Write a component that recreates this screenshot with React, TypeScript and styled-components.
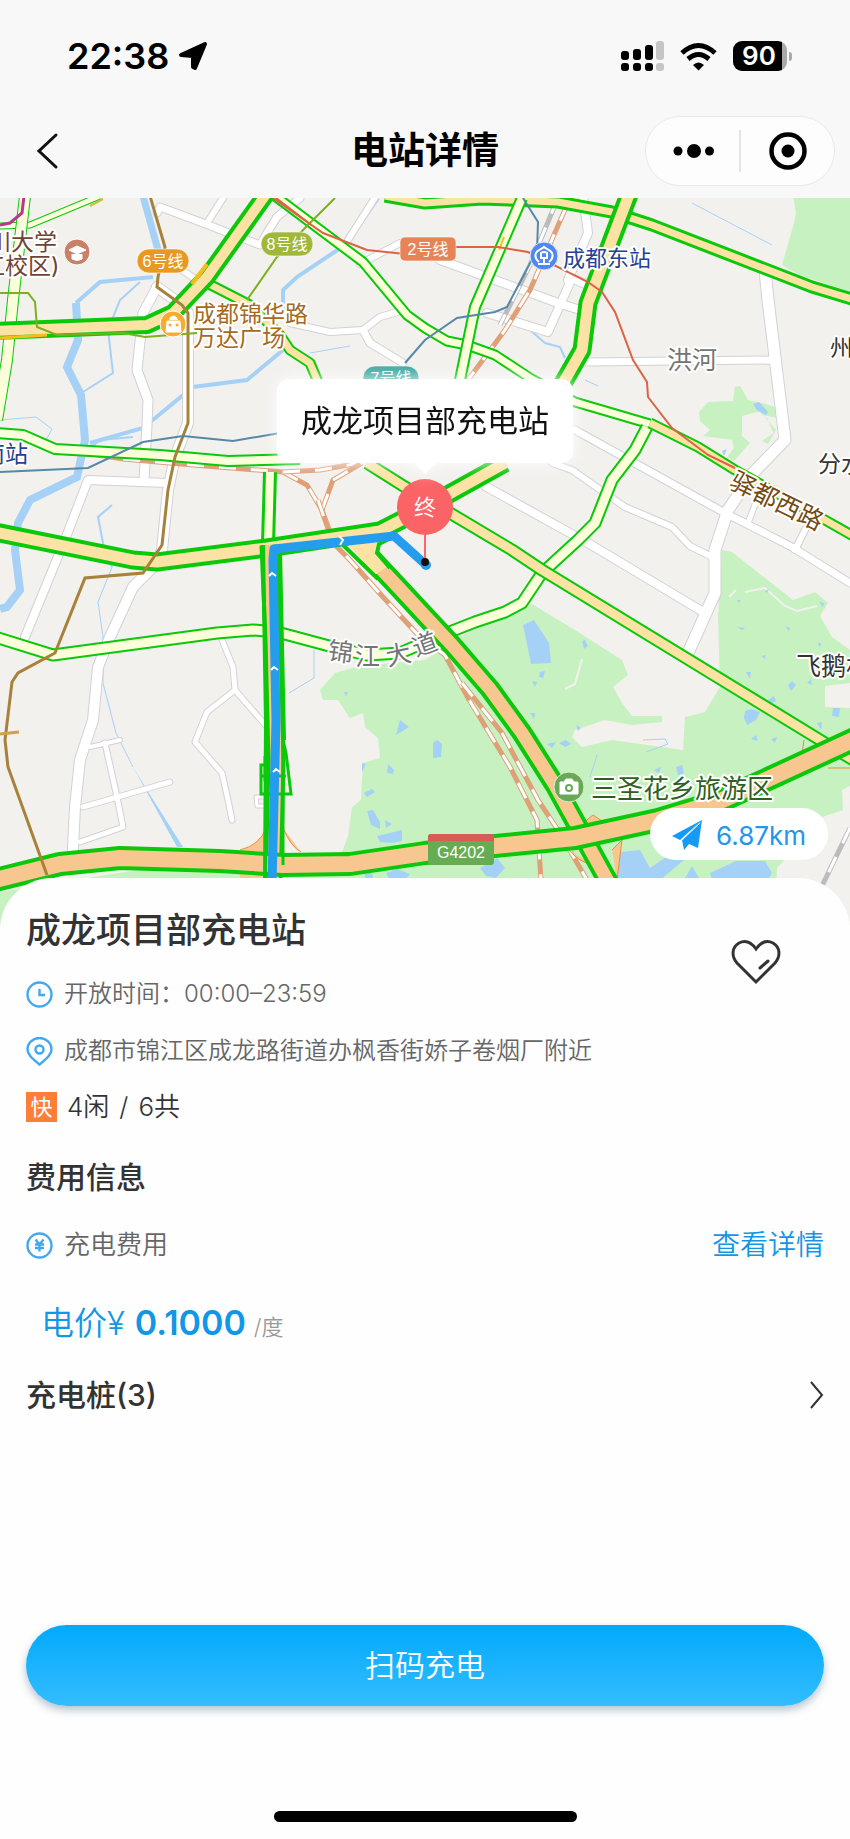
import React from "react";
import styled, { createGlobalStyle } from "styled-components";

const blue = "#1296e6";
const sans = `Inter, "Noto Sans CJK SC", sans-serif`;

const GlobalStyle = createGlobalStyle`
  * { box-sizing: border-box; }
  body { margin: 0; background: #fefefe; color: #333; font-family: ${sans}; }
  button { border: 0; padding: 0; background: none; color: inherit; font: inherit; cursor: pointer; }
  h1, h2, p { margin: 0; }
  svg { display: block; }
`;

const Screen = styled.div`
  display: flex;
  flex-direction: column;
  min-height: 100vh;
`;

const TopArea = styled.header`
  height: 198px;
  background: #f8f8f8;
`;

const StatusBar = styled.div`
  display: flex;
  align-items: center;
  height: 112px;
  padding: 0 58px 0 67px;
  color: #000;
`;

const Clock = styled.time`
  font-size: 36px;
  font-weight: 600;
  line-height: 44px;
`;

const StatusIcons = styled.div`
  display: flex;
  align-items: center;
  gap: 16px;
  margin-left: auto;
`;

const Battery = styled.div`
  display: flex;
  align-items: center;
  gap: 2px;
`;

const BatteryLevel = styled.span`
  width: 54px;
  height: 30px;
  padding-right: 2px;
  border-radius: 9px;
  background: linear-gradient(90deg, #000 49px, #a9a9a9 49px);
  color: #fff;
  font-size: 26px;
  font-weight: 600;
  line-height: 30px;
  text-align: center;
`;

const BatteryCap = styled.span`
  width: 3px;
  height: 9px;
  border-radius: 0 3px 3px 0;
  background: #a9a9a9;
`;

const NavBar = styled.nav`
  display: grid;
  grid-template-columns: 1fr auto 1fr;
  align-items: center;
  height: 77px;
  padding: 0 15px;
  color: #000;
`;

const BackButton = styled.button`
  width: 36px;
  height: 48px;
  margin-left: 15px;
`;

const NavTitle = styled.h1`
  font-size: 37px;
  font-weight: 700;
  line-height: 48px;
`;

const Capsule = styled.div`
  display: flex;
  align-items: center;
  justify-self: end;
  width: 190px;
  height: 70px;
  border: 1px solid #e9e9e9;
  border-radius: 35px;
  background: #fdfdfd;
`;

const CapsuleButton = styled.button`
  display: grid;
  place-items: center;
  flex: 1;
  height: 42px;

  & + & { border-left: 2px solid #e4e4e4; }
`;

const MapArea = styled.section`
  position: relative;
  overflow: hidden;
  aspect-ratio: 850 / 740;
  background: #f2f1ee;
`;

const MapCanvas = styled.svg`
  width: 100%;
  height: 100%;
`;

const Callout = styled.div`
  position: absolute;
  top: 24.4%;
  left: 50%;
  display: flex;
  flex-direction: column;
  align-items: center;
  transform: translateX(-50%);
  filter: drop-shadow(0 0 8px rgba(255, 255, 255, 0.9));
`;

const CalloutText = styled.p`
  padding: 18px 24px;
  border-radius: 12px;
  background: #fff;
  color: #111;
  font-size: 31px;
  line-height: 48px;
  white-space: nowrap;
`;

const CalloutTail = styled.span`
  border: 11px solid transparent;
  border-bottom: 0;
  border-top-color: #fff;
`;

const Distance = styled.button`
  position: absolute;
  top: 82.4%;
  right: 22px;
  display: flex;
  align-items: center;
  gap: 14px;
  height: 52px;
  padding: 3px 22px 0;
  border-radius: 26px;
  background: #fff;
  color: #2196ea;
  font-size: 26px;
`;

const Sheet = styled.main`
  position: relative;
  display: flex;
  flex: 1;
  flex-direction: column;
  margin-top: -60px;
  padding: 27px 26px 17px;
  border-radius: 52px 52px 0 0;
  background: #fefefe;
`;

const SheetHeader = styled.div`
  display: flex;
  align-items: flex-end;
  justify-content: space-between;
  padding-right: 43px;
`;

const StationName = styled.h2`
  font-size: 35px;
  font-weight: 500;
  line-height: 50px;
`;

const Favorite = styled.button`
  padding-bottom: 27px;
`;

const InfoRow = styled.p`
  display: flex;
  align-items: center;
  gap: 11px;
  margin-top: 21px;
  color: #666;
  font-size: 24px;
  font-weight: 350;
  line-height: 36px;
`;

const Availability = styled(InfoRow)`
  gap: 10px;
  margin-top: 20px;
  color: #333;
  font-size: 26px;
`;

const FastTag = styled.span`
  width: 31px;
  height: 30px;
  background: #fb7e39;
  color: #fff;
  font-size: 22px;
  font-weight: 400;
  line-height: 30px;
  text-align: center;
`;

const SectionTitle = styled.h2`
  margin-top: 30px;
  font-size: 30px;
  font-weight: 500;
  line-height: 44px;
`;

const FeeRow = styled.div`
  display: flex;
  align-items: center;
  gap: 11px;
  margin-top: 26px;
  color: #666;
  font-size: 26px;
  font-weight: 350;
  line-height: 40px;
`;

const DetailLink = styled.a`
  margin-left: auto;
  color: ${blue};
  font-size: 28px;
  text-decoration: none;
`;

const Price = styled.p`
  display: flex;
  align-items: baseline;
  margin-top: 34px;
  padding-left: 15px;
  color: ${blue};
  font-size: 33px;
  font-weight: 350;
  line-height: 48px;
`;

const Amount = styled.strong`
  margin-left: 10px;
  font-size: 34px;
  font-weight: 600;
`;

const Unit = styled.span`
  margin-left: 8px;
  color: #999;
  font-size: 22px;
`;

const PilesButton = styled.button`
  display: flex;
  align-items: center;
  justify-content: space-between;
  margin-top: 22px;
  font-size: 30px;
  font-weight: 500;
  line-height: 44px;
`;

const ScanButton = styled.button`
  height: 81px;
  margin-top: auto;
  padding-bottom: 5px;
  border-radius: 41px;
  background: linear-gradient(#02a9fb, #34bdff);
  box-shadow: 0 4px 9px rgba(40, 80, 120, 0.35);
  color: #fff;
  font-size: 30px;
  font-weight: 350;
`;

const HomeIndicator = styled.div`
  align-self: center;
  width: 303px;
  height: 11px;
  margin-top: 105px;
  border-radius: 6px;
  background: #000;
`;

/* ---- Map data ---- */

type Line = [points: string, width: number];

const rivers: Line[] = [
  ["143,196 158,250", 7],
  ["153,277 100,282 76,303", 4],
  ["76,303 78,340 67,367 81,395 85,440 77,477 30,500 18,523 15,550 20,590 7,607 0,609", 8],
  ["83,392 113,373 108,330 120,300 140,282", 2],
  ["90,443 143,428 193,387 247,380 283,350", 4],
  ["88,450 100,440 133,437", 2],
  ["378,198 345,245 297,277 283,290 283,310", 4],
  ["112,567 98,602 103,637 103,683 116,733 133,767", 1],
  ["112,505 98,517 103,543 112,567", 2],
  ["314,650 314,678 289,693", 1],
  ["692,203 772,245", 1],
  ["530,330 545,343 560,347 565,358", 2],
  ["0,420 36,417 52,429 46,440", 1],
  ["310,353 350,346", 1],
  ["585,380 598,386", 1],
];

const whiteRoads: Line[] = [
  ["157,213 160,207 203,223 260,245 267,233 277,217 300,198", 7],
  ["223,198 207,223", 6],
  ["376,196 348,240", 6],
  ["360,264 400,243", 6],
  ["170,262 207,287", 6],
  ["157,287 143,313 137,370 148,400 147,425 144,480", 9],
  ["157,287 182,305 188,313 188,423 175,457 168,490 162,550 157,563 133,587 110,637 98,667 93,720 80,760 75,807 72,866", 10],
  ["25,637 66,537 88,480 167,483", 8],
  ["90,747 120,740", 4],
  ["105,743 117,797 123,827 80,842", 5],
  ["83,807 170,782", 5],
  ["222,640 233,667 235,690 207,712 195,742 222,773 228,800 232,820", 5],
  ["235,690 267,727", 5],
  ["268,797 256,797 257,806 268,806", 3],
  ["290,323 330,332 363,330 380,317 397,312", 6],
  ["363,330 370,343 403,363", 7],
  ["440,260 558,303 577,309", 8],
  ["487,313 548,332 572,278 592,287", 8],
  ["568,280 588,233 583,196", 8],
  ["765,270 768,300 775,357 785,440 753,473 728,510 715,550 715,593 688,653", 11],
  ["588,362 775,360", 7],
  ["575,430 725,513 792,547 850,583", 7],
  ["485,486 588,543 705,613", 8],
  ["552,463 572,470 625,507 672,527 690,546 712,557", 6],
  ["758,497 748,523", 5],
  ["805,530 795,550", 6],
];

const parks = [
  "793,196 796,213 794,223 782,265 800,275 850,292 850,196",
  "740,386 735,387 733,401 708,402 699,412 700,421 710,430 703,436 732,440 734,448 727,457 734,461 750,443 742,436 742,416 757,412 767,418 773,433 762,441 768,444 776,430 763,415 777,418 777,408 766,404 748,400",
  "425,660 360,666 335,673 320,690 323,700 338,700 350,718 363,713 365,727 378,738 380,758 363,763 361,800 352,807 348,836 339,860 420,890 776,890 777,868 822,817 843,810 842,790 850,786 850,708 825,707 825,686 850,683 850,650 832,637 820,616 828,603 815,592 793,600 732,552 722,550 718,617 720,687 705,712 685,717 683,750 612,740 582,747 572,737 575,730 605,720 632,725 662,722 662,716 632,716 622,703 613,687 628,675 622,660 575,630 532,604 475,628",
  "0,892 150,868 425,868 425,940 0,940",
];

const lakes = [
  "523,625 534,620 549,643 551,663 531,664",
  "400,720 396,735 409,727", "344,692 348,692 346,697",
  "362,763 366,764 362,772", "388,764 394,770 393,774 387,773",
  "364,793 372,789 375,792 367,797", "367,811 373,810 380,822 380,829 371,825",
  "385,820 392,824 386,828", "377,836 402,830 402,841 392,843 380,842",
  "433,743 437,740 442,744 441,757 433,758",
  "582,641 585,640 588,646 584,649", "540,672 545,671 543,678 539,677",
  "532,681 537,682 535,687", "530,713 535,713 534,719", "547,744 556,742 552,748",
  "559,743 566,740 571,744 565,747", "576,725 581,728 578,731",
  "654,770 661,767 659,773", "676,767 682,765 684,774 678,775",
  "745,711 752,709 760,712 756,720 747,725 744,718", "768,700 774,696 776,701 770,704",
  "788,685 792,681 796,685 791,691", "807,683 811,679 812,685", "833,708 840,708 839,717 832,716",
  "818,642 822,644 819,647", "746,672 751,672 750,679", "761,656 766,655 765,659",
  "765,591 769,589 767,593", "737,600 741,600 739,603", "737,627 745,628 742,630",
  "785,626 790,628 789,631", "819,602 824,603 823,607", "771,739 777,737 775,743",
  "751,739 756,735 758,741", "817,723 822,722 821,730",
  "480,868 497,858 505,868 496,878 486,876", "614,878 620,852 640,850 650,868 672,853 700,851 684,860 660,880",
  "710,873 736,861 765,861 772,873 768,880 712,880", "685,878 692,866 700,880",
  "364,872 371,872 374,880 366,880", "386,873 397,869 410,874 405,880 390,880",
  "753,404 759,402 768,412 766,415 757,410", "722,451 727,449 724,456",
];

type Highway = { points: string; width: number; edge: number; fill: string };

const cream = "#fafed9";
const yellow = "#fce3a5";
const orange = "#f8c78f";

const highways: Highway[] = [
  { points: "0,226 30,225 100,196", width: 7, edge: 1, fill: cream },
  { points: "25,196 13,300 7,360 -3,420", width: 12, edge: 1, fill: cream },
  { points: "-5,433 23,435 55,449 160,455 228,461 300,459", width: 12, edge: 2, fill: cream },
  { points: "275,196 363,262 407,315 425,328 447,341 467,345 495,355 530,378 575,402 650,424", width: 11, edge: 2, fill: cream },
  { points: "-5,637 53,655 217,633 253,630 277,632 333,647 367,655 400,653 442,635 475,622 505,612 522,603 542,573 578,540 595,523 612,480 635,450 647,427", width: 13, edge: 2, fill: cream },
  { points: "207,283 250,305 280,335 290,350 310,363 318,382", width: 11, edge: 2, fill: yellow },
  { points: "650,423 698,447 735,470 825,520 855,537", width: 11, edge: 2, fill: yellow },
  { points: "270,472 268,545", width: 14, edge: 3, fill: cream },
  { points: "367,463 405,487 445,510 512,550 542,570 825,743 855,761", width: 13, edge: 2, fill: yellow },
  { points: "385,196 425,203 482,199 558,202 612,212 652,225 812,287 855,300", width: 13, edge: 3, fill: yellow },
  { points: "-5,331 147,325 173,313 207,277 267,193", width: 18, edge: 4, fill: yellow },
  { points: "522,198 475,307 460,380", width: 12, edge: 2, fill: cream },
  { points: "630,192 588,303 582,350 562,385", width: 19, edge: 4, fill: yellow },
  { points: "-5,532 133,560 157,562 267,548 380,531 415,513 505,463", width: 19, edge: 4, fill: yellow },
  { points: "269,545 273,640 276,760 273,890", width: 19, edge: 4, fill: orange },
  { points: "370,557 400,589 425,616 452,645 490,689 522,733 555,785 610,885", width: 21, edge: 4, fill: orange },
  { points: "-5,880 60,864 120,858 220,861 283,865 350,864 425,853 575,838 658,820 718,802 855,739", width: 24, edge: 4, fill: orange },
];

type Rail = { points: string; gray?: boolean };

const rails: Rail[] = [
  { points: "558,198 530,265 500,325", gray: true },
  { points: "567,205 530,290 505,330 468,380" },
  { points: "60,449 123,459 193,465 283,472 307,485 322,510 333,540" },
  { points: "283,472 320,470 360,463" },
  { points: "322,510 333,480 362,463" },
  { points: "318,500 333,543 350,560 383,597 420,637 445,655 468,698 510,767 537,820 541,880" },
  { points: "462,683 502,733 538,800 558,830 587,880" },
  { points: "850,828 820,890", gray: true },
];

type Transit = { points: string; color: string; width: number };

const transit: Transit[] = [
  { points: "24,196 22,213 10,223 0,225", color: "#b8388f", width: 3 },
  { points: "150,196 165,247 158,277 157,287 182,305 188,313 188,423 175,457 168,490 162,545 143,573 85,578 55,653 18,673 12,682 5,740 8,767 47,875", color: "#a8813a", width: 3 },
  { points: "0,734 19,732", color: "#d0a14a", width: 3 },
  { points: "335,198 305,228 277,257 247,300", color: "#7fae20", width: 2 },
  { points: "0,293 28,293 35,302 37,327 57,335 123,333 145,337 197,333", color: "#7fae20", width: 2 },
  { points: "273,198 323,233 367,250 405,254 455,247 498,247 528,252 588,282 602,292 615,312 633,360 647,382 648,397 672,428 708,455 735,468", color: "#dc6246", width: 2 },
  { points: "523,198 538,222 537,250 507,307 495,312 457,318 425,340 405,363", color: "#5688a8", width: 2 },
  { points: "0,472 88,468 143,442 183,436 233,441 280,433", color: "#5688a8", width: 2 },
];

const MapLabel = styled.text<{ $size: number; $color: string }>`
  font-size: ${(p) => p.$size}px;
  fill: ${(p) => p.$color};
  stroke: #fffffb;
  stroke-width: 4px;
  stroke-linejoin: round;
  paint-order: stroke;
`;

const BadgeText = styled.text`
  fill: #fff;
  font-family: "Liberation Sans", "Noto Sans CJK SC", sans-serif;
  font-size: 16px;
  text-anchor: middle;
`;

function LineBadge({ x, y, width, color, radius = 12, label }: { x: number; y: number; width: number; color: string; radius?: number; label: string }) {
  return (
    <g>
      <rect x={x - width / 2} y={y - 12} width={width} height={24} rx={radius} fill={color} stroke="#fff" strokeOpacity=".6" />
      <BadgeText x={x} y={y + 6} fontSize="15">{label}</BadgeText>
    </g>
  );
}

function CityMap() {
  return (
    <MapCanvas viewBox="0 198 850 740" preserveAspectRatio="xMidYMin slice" fill="none" role="img" aria-label="路线地图">
      {parks.map((p) => <polygon key={p} points={p} fill="#c8f1c2" />)}
      <polygon points="742,418 760,412 767,420 773,433 762,441 744,434" fill="#f2f1ee" />
      <path d="M729 597l7-7M745 592l20-4 20 18 12 5 20-5M565 689l10-5 7-25M772 785l20-6" stroke="#f2f1ee" strokeWidth="2" />
      {lakes.map((p) => <polygon key={p} points={p} fill="#a6d1f7" />)}
      <polygon points="133,767 147,790 183,847 177,847" fill="#a6d1f7" />
      <path d="M643 740l22-1 3 5-22 8M597 755l-7 22" stroke="#a6d1f7" />
      {rivers.map(([p, w]) => <polyline key={p} points={p} stroke="#a6d1f7" strokeWidth={w} />)}
      {whiteRoads.map(([p, w]) => <polyline key={p} points={p} stroke="#d2d2d6" strokeWidth={w + 2} strokeLinejoin="round" strokeLinecap="round" />)}
      {whiteRoads.map(([p, w]) => <polyline key={p} points={p} stroke="#fff" strokeWidth={w} strokeLinejoin="round" strokeLinecap="round" />)}
      {rails.map(({ points, gray }) => (
        <g key={points}>
          <polyline points={points} stroke={gray ? "#bcbcbc" : "#dfa078"} strokeWidth="5" />
          <polyline points={points} stroke="#fff" strokeWidth="3" strokeDasharray="17 15" />
        </g>
      ))}
      <path d="M240 850q20-5 26-22v60h-26M283 828q8 19 18 24M569 835l24-20 12 8M569 850q10 12 22 14M612 850l10-10-5 40M804 740q-2 13-2 18M812 740h40M828 768h24" fill={orange} stroke="#eb8d3b" />
      {highways.map(({ points, width, edge, fill }) => (
        <g key={points} strokeLinejoin="round">
          <polyline points={points} stroke="#0bc80b" strokeWidth={width} />
          <polyline points={points} stroke={fill} strokeWidth={width - edge * 2} />
        </g>
      ))}
      <polygon points="345,541 392,534 379,543 377,553 388,566 375,575" fill={yellow} />
      <path d="M343 545L378 579M391 538L379 544 377 553 390 568" stroke="#0bc80b" strokeWidth="4" />
      <path d="M207 264L192 284" stroke="#f6bd20" strokeWidth="4" />
      <path d="M0 338L47 335" stroke="#f6bd20" strokeWidth="3" />
      <path d="M90 206L103 199" stroke="#c9c23a" strokeWidth="2" />
      <path d="M504 237L499 250" stroke="#f6bd20" strokeWidth="2" />
      <path d="M276 198L310 224" stroke="#dc6246" strokeWidth="2" />
      <path d="M265 780v-15h-4v29h30l-5-41-3-13v125M265 756v25M261 776h25" stroke="#0bc80b" strokeWidth="3" />
      <path d="M263 545L266 722 265 884M280 550L284 740" stroke="#0bc80b" strokeWidth="4" />
      {transit.map(({ points, color, width }) => <polyline key={points} points={points} stroke={color} strokeWidth={width} />)}
      <path d="M425 564L394 536 274 549 273 560 276 720 272 884" stroke="#259ded" strokeWidth="9" strokeLinejoin="round" />
      <g stroke="#fff" strokeWidth="2">
        <path d="M339 536l4 4-3 5M269 576l3-3 4 3M271 670l3-3 4 3M273 772l3-3 4 3" />
      </g>

      <MapLabel x="-12" y="250" $size={23} $color="#6d4438">川大学</MapLabel>
      <MapLabel x="-18" y="274" $size={23} $color="#6d4438">江校区)</MapLabel>
      <circle cx="77" cy="252" r="13" fill="#c98069" stroke="#fff" />
      <path d="M69 250l8-4 9 4-9 4zM72 254v5q5 3 10 0v-5" fill="#fff" stroke="#fff" />
      <LineBadge x={163} y={261} width={52} color="#e69a23" label="6号线" />
      <LineBadge x={287} y={244} width={52} color="#9fb83a" label="8号线" />
      <LineBadge x={428} y={249} width={56} color="#e68357" radius={5} label="2号线" />
      <LineBadge x={391} y={378} width={56} color="#3faaa2" label="7号线" />
      <circle cx="173" cy="324" r="13" fill="#f8ab2e" stroke="#fff" />
      <path d="M167 321h13l1 11h-15zM170 320v-2q3-4 7 0v2" fill="#fff" stroke="#fff" />
      <path d="M170 325h.1M177 325h.1" stroke="#f8ab2e" strokeWidth="3" strokeLinecap="round" />
      <MapLabel x="193" y="322" $size={23} $color="#a5691f">成都锦华路</MapLabel>
      <MapLabel x="193" y="346" $size={23} $color="#a5691f">万达广场</MapLabel>
      <circle cx="544" cy="256" r="14" fill="#5188ef" stroke="#dceaff" />
      <path d="M539 262q-5-4-3-9c2-4 5-3 8-6 3 3 6 2 8 6q2 5-3 9M541 258v-5q3-2 6 0v5zM538 264h12M544 259v4" stroke="#fff" strokeWidth="2" />
      <MapLabel x="563" y="266" $size={22} $color="#254196">成都东站</MapLabel>
      <MapLabel x="-18" y="462" $size={23} $color="#254196">南站</MapLabel>
      <MapLabel x="667" y="369" $size={25} $color="#74757a">洪河</MapLabel>
      <MapLabel x="830" y="356" $size={23} $color="#333">州镇</MapLabel>
      <MapLabel x="818" y="472" $size={23} $color="#333">分水</MapLabel>
      <MapLabel x="728" y="487" $size={25} $color="#724a12" transform="rotate(26 728 487)">驿都西路</MapLabel>
      <MapLabel x="327" y="659" $size={25} $color="#74757a" transform="rotate(8 327 659)">锦</MapLabel>
      <MapLabel x="355" y="665" $size={25} $color="#74757a">江</MapLabel>
      <MapLabel x="388" y="666" $size={25} $color="#74757a" transform="rotate(-12 388 666)">大</MapLabel>
      <MapLabel x="416" y="657" $size={25} $color="#74757a" transform="rotate(-20 416 657)">道</MapLabel>
      <MapLabel x="796" y="675" $size={25} $color="#333">飞鹅村</MapLabel>
      <circle cx="569" cy="787" r="15" fill="#68a956" stroke="#d7efcf" />
      <path d="M560 782h4l2-3h6l2 3h4v12h-18z" fill="#fff" stroke="#fff" strokeLinejoin="round" />
      <circle cx="569" cy="788" r="3" stroke="#68a956" strokeWidth="2" />
      <MapLabel x="591" y="798" $size={26} $color="#2d5f27">三圣花乡旅游区</MapLabel>
      <rect x="428" y="834" width="66" height="31" rx="3" fill="#66ac52" />
      <path d="M431 834h60q3 0 3 3v4h-66v-4q0-3 3-3z" fill="#d95b55" />
      <BadgeText x="461" y="858">G4202</BadgeText>

      <circle cx="426" cy="565" r="5" fill="#259ded" />
      <path d="M425 530v32" stroke="#f86a6b" strokeWidth="2" />
      <circle cx="425" cy="562" r="4" fill="#111" />
      <circle cx="425" cy="507" r="28" fill="#fb6467" />
      <text x="425" y="515" fill="#fff" fontSize="22" fontWeight="350" textAnchor="middle">终</text>
    </MapCanvas>
  );
}

/* ---- Icons ---- */

const LocationArrow = styled.svg`
  margin-left: 9px;
`;

const LineIcon = styled.svg`
  flex: none;
  width: 27px;
  height: 29px;
  fill: none;
  stroke: #42a8ec;
  stroke-width: 2.4;
`;

export default function App() {
  return (
    <Screen>
      <GlobalStyle />
      <TopArea>
        <StatusBar>
          <Clock>22:38</Clock>
          <LocationArrow width="30" height="30" viewBox="0 0 30 30" aria-hidden="true">
            <path d="M3 14L27 3 17 27 15 26V15L3 14z" stroke="#000" strokeWidth="4" strokeLinejoin="round" />
          </LocationArrow>
          <StatusIcons>
            <svg width="43" height="31" viewBox="0 0 43 31" aria-label="信号">
              <rect x="0" y="10" width="8" height="9" rx="3" />
              <rect x="12" y="8" width="8" height="11" rx="3" />
              <rect x="24" y="4" width="8" height="15" rx="3" />
              <rect x="35" y="0" width="8" height="19" rx="3" fill="#c5c5c5" />
              <rect x="0" y="22" width="8" height="8" rx="3" />
              <rect x="12" y="22" width="8" height="8" rx="3" />
              <rect x="24" y="22" width="8" height="8" rx="3" />
              <rect x="35" y="22" width="8" height="8" rx="3" fill="#c5c5c5" />
            </svg>
            <svg width="37" height="29" viewBox="0 0 37 29" fill="none" stroke="#000" strokeWidth="5" aria-label="无线网络">
              <path d="M2 11Q18.500-4 35 11M8 17Q18.500 8 29 17" />
              <path d="M13 23Q18.500 18 24 23L18.500 28.500z" fill="#000" stroke="none" />
            </svg>
            <Battery>
              <BatteryLevel>90</BatteryLevel>
              <BatteryCap />
            </Battery>
          </StatusIcons>
        </StatusBar>
        <NavBar>
          <BackButton aria-label="返回">
            <svg width="36" height="40" viewBox="0 0 36 40" fill="none" stroke="#111" strokeWidth="3" strokeLinecap="round">
              <path d="M26 4L9 20 26 36" />
            </svg>
          </BackButton>
          <NavTitle>电站详情</NavTitle>
          <Capsule>
            <CapsuleButton aria-label="更多">
              <svg width="42" height="14" viewBox="0 0 42 14">
                <circle cx="6" cy="7" r="4.500" />
                <circle cx="22" cy="7" r="7" />
                <circle cx="37.500" cy="7" r="4.500" />
              </svg>
            </CapsuleButton>
            <CapsuleButton aria-label="关闭">
              <svg width="38" height="38" viewBox="0 0 38 38">
                <circle cx="19" cy="19" r="16.500" fill="none" stroke="#000" strokeWidth="4.500" />
                <circle cx="19" cy="19" r="6.500" />
              </svg>
            </CapsuleButton>
          </Capsule>
        </NavBar>
      </TopArea>

      <MapArea>
        <CityMap />
        <Callout>
          <CalloutText>成龙项目部充电站</CalloutText>
          <CalloutTail />
        </Callout>
        <Distance>
          <svg width="30" height="30" viewBox="0 0 30 30" fill="#159bf5" aria-hidden="true">
            <path d="M30 0L0 16l8 4zM30 0L10 20l2 10 5-6 9 4z" />
            <path d="M10 20L28 3" stroke="#fff" />
          </svg>
          6.87km
        </Distance>
      </MapArea>

      <Sheet>
        <SheetHeader>
          <div>
            <StationName>成龙项目部充电站</StationName>
            <InfoRow>
              <LineIcon viewBox="0 0 27 29" aria-hidden="true">
                <circle cx="13.500" cy="14.500" r="12" />
                <path d="M13.500 9v6H19" />
              </LineIcon>
              开放时间：00:00–23:59
            </InfoRow>
          </div>
          <Favorite aria-label="收藏">
            <svg width="50" height="46" viewBox="0 0 50 46" fill="none" stroke="#333" strokeWidth="3">
              <path d="M25 43L6 24C0 17 1 8 8 4c6-3 12-1 17 6 5-7 11-9 17-6 7 4 8 13 2 20z" />
              <path d="M29 29l8-7" strokeLinecap="round" />
            </svg>
          </Favorite>
        </SheetHeader>
        <InfoRow>
          <LineIcon viewBox="0 0 27 29" aria-hidden="true">
            <path d="M13.500 27.500C7 22 1.500 18 1.500 12.500a12 11.500 0 0 1 24 0C25.500 18 20 22 13.500 27.500z" />
            <circle cx="13.500" cy="12.500" r="4" />
          </LineIcon>
          成都市锦江区成龙路街道办枫香街娇子卷烟厂附近
        </InfoRow>
        <Availability>
          <FastTag>快</FastTag>
          <span>4闲</span>
          <span>/</span>
          <span>6共</span>
        </Availability>

        <SectionTitle>费用信息</SectionTitle>
        <FeeRow>
          <LineIcon viewBox="0 0 27 29" aria-hidden="true">
            <circle cx="13.500" cy="14.500" r="12" />
            <path d="M9.500 8.500l4 5 4-5M13.500 13v7.500M9 13.500h9M9 17h9" />
          </LineIcon>
          充电费用
          <DetailLink href="#fees">查看详情</DetailLink>
        </FeeRow>
        <Price>
          电价¥<Amount>0.1000</Amount>
          <Unit>/度</Unit>
        </Price>
        <PilesButton>
          充电桩(3)
          <svg width="16" height="30" viewBox="0 0 16 30" fill="none" stroke="#333" strokeWidth="2">
            <path d="M3 2l11 13L3 28" />
          </svg>
        </PilesButton>

        <ScanButton>扫码充电</ScanButton>
        <HomeIndicator />
      </Sheet>
    </Screen>
  );
}
